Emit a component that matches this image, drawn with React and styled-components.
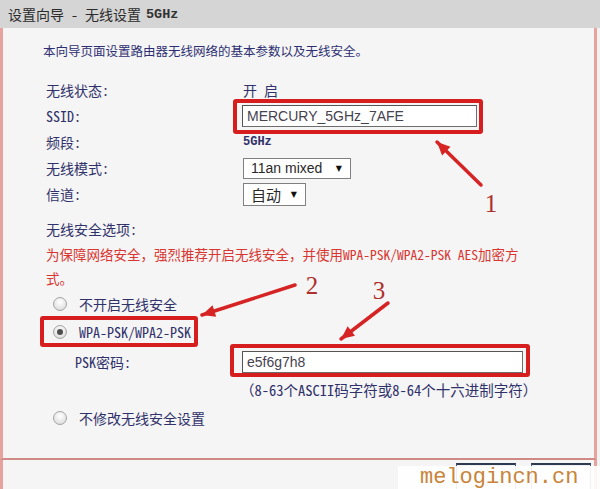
import styled, { createGlobalStyle } from "styled-components";

const CN = `"Noto Sans Mono CJK SC", "Noto Sans CJK SC", sans-serif`;

const GlobalStyle = createGlobalStyle`
  html, body {
    margin: 0;
    padding: 0;
    background: #f2f2f2;
  }
  body {
    font-family: ${CN};
  }
`;

const arrows = [
  { from: [481, 185], to: [437, 142] },
  { from: [295, 285], to: [202, 315] },
  { from: [388, 303], to: [341, 339] },
];

const marks = [
  { n: "1", x: 491, y: 212 },
  { n: "2", x: 312, y: 294 },
  { n: "3", x: 379, y: 299 },
];

// arrowhead triangle from the line direction
const headPoints = ([x1, y1], [x2, y2], len = 13, half = 6) => {
  const dx = x2 - x1;
  const dy = y2 - y1;
  const d = Math.hypot(dx, dy);
  const ux = dx / d;
  const uy = dy / d;
  const bx = x2 - ux * len;
  const by = y2 - uy * len;
  return `${x2},${y2} ${bx - uy * half},${by + ux * half} ${bx + uy * half},${by - ux * half}`;
};

const App = () => {
  return (
    <>
      <GlobalStyle />
      <Window>
        <TitleBar>
          设置向导 - 无线设置 <small>5GHz</small>
        </TitleBar>

        <Panel>
          <Intro>本向导页面设置路由器无线网络的基本参数以及无线安全。</Intro>

          <Form>
            <Row>
              <Label>无线状态:</Label>
              <Value>开 启</Value>
            </Row>
            <Row>
              <Label>SSID:</Label>
              <Marked $l={9} $r={6} $t={6} $b={7}>
                <TextInput $w={235} readOnly value="MERCURY_5GHz_7AFE" />
              </Marked>
            </Row>
            <Row>
              <Label>频段:</Label>
              <Small>5GHz</Small>
            </Row>
            <Row>
              <Label>无线模式:</Label>
              <FakeSelect $w={108}>
                <span>11an mixed</span>
                <Caret>▼</Caret>
              </FakeSelect>
            </Row>
            <Row>
              <Label>信道:</Label>
              <FakeSelect $w={63} $h={23} $cn>
                <span>自动</span>
                <Caret>▼</Caret>
              </FakeSelect>
            </Row>

            <Section>无线安全选项:</Section>
            <Warning>
              为保障网络安全，强烈推荐开启无线安全，并使用WPA-PSK/WPA2-PSK AES加密方
              <br />
              式。
            </Warning>

            <Option>
              <Radio />
              <span>不开启无线安全</span>
            </Option>
            <Option $boxed>
              <Radio $checked />
              <span>WPA-PSK/WPA2-PSK</span>
            </Option>
            <Row $h={28} $mt={2}>
              <Label $indent={29}>PSK密码:</Label>
              <Marked $l={12} $r={7} $t={7} $b={4}>
                <TextInput $w={281} readOnly value="e5f6g7h8" />
              </Marked>
            </Row>
            <Row>
              <span />
              <Hint>（8-63个ASCII码字符或8-64个十六进制字符）</Hint>
            </Row>
            <Option $mt={2}>
              <Radio />
              <span>不修改无线安全设置</span>
            </Option>
          </Form>
        </Panel>

        <Footer>
          <NavButton />
          <NavButton />
        </Footer>

        <Annotations viewBox="0 0 600 489" width="600" height="489">
          {arrows.map((a, i) => (
            <g key={i}>
              <line
                x1={a.from[0]}
                y1={a.from[1]}
                x2={a.to[0]}
                y2={a.to[1]}
                stroke="#d62424"
                strokeWidth="3.5"
                strokeLinecap="round"
              />
              <polygon points={headPoints(a.from, a.to)} fill="#d62424" />
            </g>
          ))}
          {marks.map((m) => (
            <text
              key={m.n}
              x={m.x}
              y={m.y}
              textAnchor="middle"
              fontFamily="'Liberation Serif', serif"
              fontSize="25"
              fill="#ad302c"
            >
              {m.n}
            </text>
          ))}
        </Annotations>

        <Watermark>melogincn.cn</Watermark>
      </Window>
    </>
  );
};

// --- STYLED COMPONENTS ---

const Window = styled.div`
  position: relative;
  width: 600px;
  height: 489px;
  overflow: hidden;
  display: flex;
  flex-direction: column;
  background: #f2f2f2;
`;

const TitleBar = styled.div`
  height: 28px;
  flex-shrink: 0;
  display: flex;
  align-items: center;
  gap: 5px;
  padding-left: 8px;
  background: #d5d5d5;
  color: #2b2b2b;
  font-size: 14px;

  small {
    font-family: "Liberation Mono", monospace;
    font-size: 13.5px;
    font-weight: bold;
    color: #333;
  }
`;

const Panel = styled.div`
  height: 430px;
  flex-shrink: 0;
  margin-right: 3px;
  padding-left: 40px;
  background: #f5f5f5;
  border-left: 3px solid #e6a39d;
  border-right: 3px solid #e6a39d;
  border-bottom: 2px solid #cf8a86;
`;

const Intro = styled.div`
  padding-top: 10px;
  line-height: 26px;
  font-size: 12.5px;
  color: #2d2f72;
`;

const Form = styled.div`
  margin-top: 13px;
  margin-left: 3px;
  color: #30316b;
  font-size: 14px;
`;

const Row = styled.div`
  display: grid;
  grid-template-columns: 197px auto;
  align-items: center;
  justify-items: start;
  height: ${(p) => p.$h || 26}px;
  margin-top: ${(p) => p.$mt || 0}px;
`;

const Label = styled.span`
  padding-left: ${(p) => p.$indent || 0}px;
  white-space: nowrap;
`;

const Value = styled.span`
  white-space: pre;
`;

const Small = styled.span`
  font-family: "Liberation Mono", monospace;
  font-size: 12px;
  font-weight: bold;
  color: #30316b;
`;

const Marked = styled.span`
  position: relative;
  display: inline-flex;
  margin-left: -1px;

  &::after {
    content: "";
    position: absolute;
    left: -${(p) => p.$l}px;
    right: -${(p) => p.$r}px;
    top: -${(p) => p.$t}px;
    bottom: -${(p) => p.$b}px;
    border: 4px solid #d61e1e;
    border-radius: 3px;
    pointer-events: none;
  }
`;

const TextInput = styled.input`
  width: ${(p) => p.$w}px;
  height: 22px;
  box-sizing: border-box;
  padding: 0 4px;
  border: 1px solid #6d6d6d;
  border-top-color: #555;
  border-left-color: #555;
  background: #fff;
  color: #46424f;
  font-family: "Liberation Sans", Arial, sans-serif;
  font-size: 14px;
  outline: none;
`;

const FakeSelect = styled.div`
  width: ${(p) => p.$w}px;
  height: ${(p) => p.$h || 21}px;
  box-sizing: border-box;
  display: flex;
  align-items: center;
  justify-content: space-between;
  padding: 0 8px 0 7px;
  border: 1px solid #808080;
  background: #fff;
  color: #2a2a2a;
  font-family: ${(p) => (p.$cn ? CN : `"Liberation Sans", Arial, sans-serif`)};
  font-size: ${(p) => (p.$cn ? 15 : 14)}px;
`;

const Caret = styled.span`
  font-family: "DejaVu Sans", sans-serif;
  font-size: 8px;
  color: #111;
`;

const Section = styled.div`
  margin-top: 9px;
  height: 26px;
  line-height: 26px;
`;

const Warning = styled.div`
  line-height: 24px;
  font-size: 13.5px;
  color: #d93631;
  white-space: nowrap;
`;

const Option = styled.div`
  position: relative;
  display: flex;
  align-items: center;
  gap: 12px;
  width: fit-content;
  height: 28px;
  margin-top: ${(p) => p.$mt || 0}px;
  margin-left: 7px;

  &::after {
    content: "";
    display: ${(p) => (p.$boxed ? "block" : "none")};
    position: absolute;
    left: -13px;
    right: -7px;
    top: -2px;
    bottom: -1px;
    border: 4px solid #d61e1e;
    border-radius: 3px;
  }
`;

const Radio = styled.span`
  position: relative;
  width: 14px;
  height: 14px;
  box-sizing: border-box;
  border-radius: 50%;
  border: 1px solid #a4a4a4;
  background: radial-gradient(circle at 50% 35%, #ffffff 0%, #e6e6e6 60%, #d2d2d2 100%);

  &::after {
    content: "";
    display: ${(p) => (p.$checked ? "block" : "none")};
    position: absolute;
    left: 3px;
    top: 3px;
    width: 6px;
    height: 6px;
    border-radius: 50%;
    background: #4d4d4d;
  }
`;

const Hint = styled.span`
  margin-left: -3px;
  font-size: 14.5px;
  white-space: nowrap;
`;

const Footer = styled.div`
  height: 27px;
  flex-shrink: 0;
  margin-right: 3px;
  display: flex;
  justify-content: flex-end;
  align-items: flex-start;
  gap: 15px;
  padding: 3px 3px 0 0;
  overflow: hidden;
  background: #f5f5f5;
  border-left: 3px solid #e6a39d;
  border-right: 3px solid #e6a39d;
  border-bottom: 2px solid #e6a39d;
`;

const NavButton = styled.div`
  width: 60px;
  height: 30px;
  box-sizing: border-box;
  border: 1px solid #4d5b72;
  border-top: 2px solid #2d3a50;
  background: #eef0f3;
`;

const Annotations = styled.svg`
  position: absolute;
  left: 0;
  top: 0;
  pointer-events: none;
`;

const Watermark = styled.div`
  position: absolute;
  right: 0;
  bottom: 0;
  width: 180px;
  height: 23px;
  padding-left: 22px;
  background: rgba(255, 255, 255, 0.9);
  color: #c8843a;
  font-family: "Liberation Mono", monospace;
  font-size: 22px;
  line-height: 23px;
  white-space: nowrap;
`;

export default App;
